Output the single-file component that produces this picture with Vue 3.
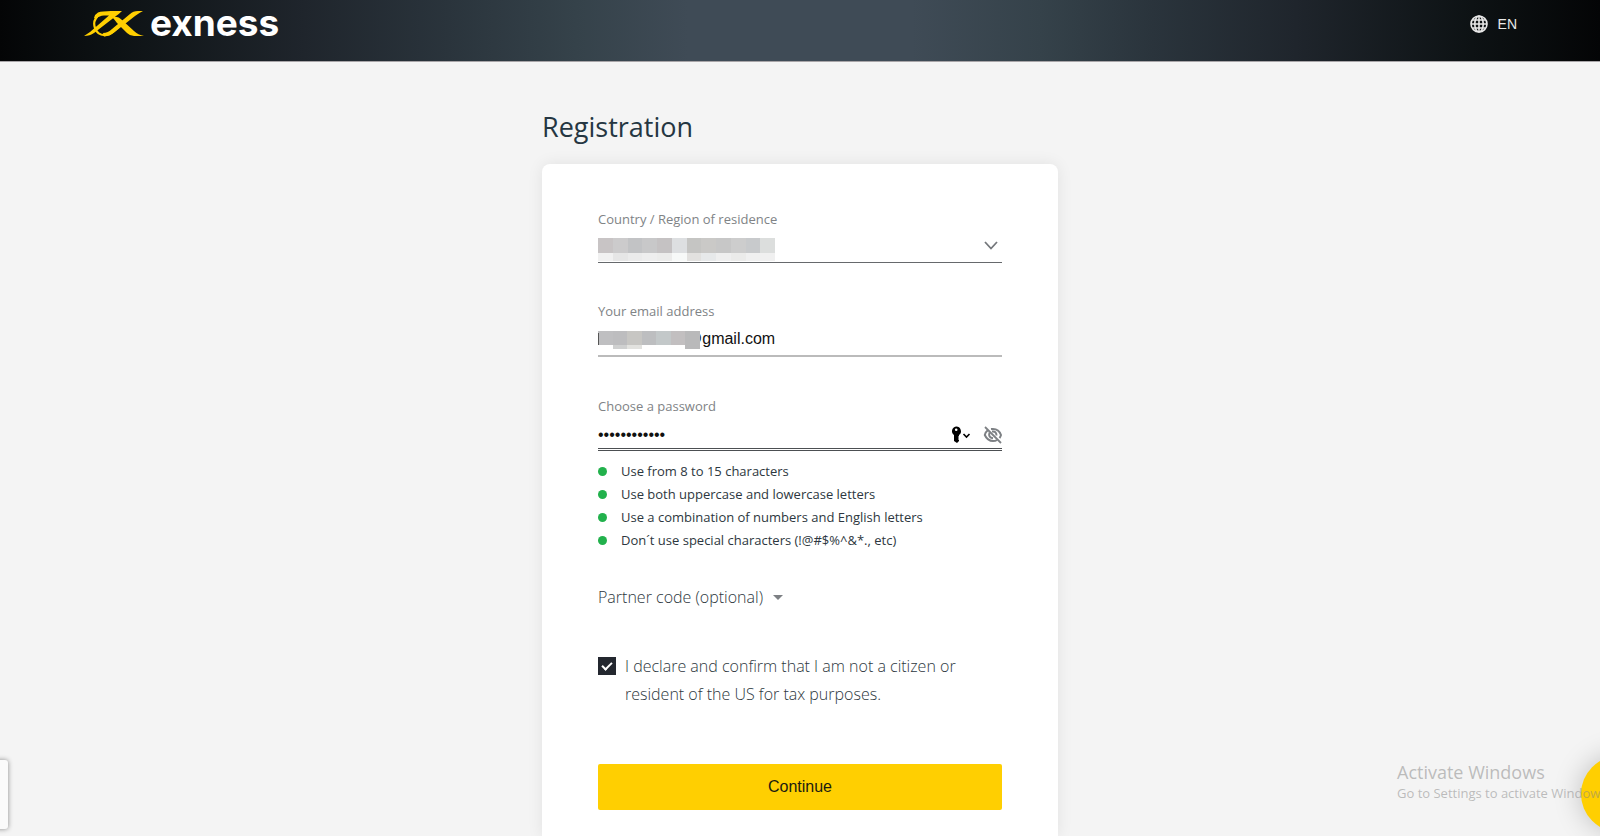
<script setup>
import { ref } from 'vue'

const country = ref('')
const email = ref('@gmail.com')
const password = ref('abcdEFGH1234')
const declared = ref(true)

const rules = [
  'Use from 8 to 15 characters',
  'Use both uppercase and lowercase letters',
  'Use a combination of numbers and English letters',
  'Don´t use special characters (!@#$%^&*., etc)'
]

const countryTop = ['#c8c4c5', '#cccbcc', '#c2c3c5', '#c8c8c9', '#c5c2c3', '#dddfe1', '#c5c5c3', '#cac9c7', '#c7c7c7', '#cdcdcd', '#c8cacc', '#dcdedd']
const countryBottom = ['#f1f1f1', '#e6e6e6', '#ebebeb', '#eeeeee', '#ececeb', '#f7f9f8', '#e2e1df', '#e7e9ea', '#efefef', '#ebebea', '#f0f0f0', '#f0f0f0']
const emailTop = ['#bfbfc1', '#bdbdbf', '#c7c6c3', '#bdbec0', '#c3c8c9', '#c2bfc0', '#b9b9ba']
const emailBottom = ['#ffffff', '#cfd0d0', '#e2e2df', '#ffffff', '#ffffff', '#ffffff', '#b9b9ba']
</script>

<template>
  <div class="page">
    <header class="header">
      <a class="logo" href="#" aria-label="exness">
        <svg class="mark" viewBox="0 0 60 26" aria-hidden="true">
          <path d="M14 1.500Q18 0 27 0L38 0Q35 3 32 5L10 22Q6 25 0 25Q3 23 6 21L25 4.500L20 4.500Q15 5 13 7L10 7Q11 3 14 1.500Z" fill="#ffcf01" />
          <path d="M16 3Q8 9 11 17Q14 26 25 23.500Q30 21 36 14" fill="none" stroke="#ffcf01" stroke-width="2.200" />
          <path d="M28 6Q34 4.500 38 9L50 20Q54 24 60 25L50 25Q46 25 43 22L33 12Q30 8 28 6Z" fill="#ffcf01" />
          <path d="M59 0Q55 2 51 5L32 20Q26 25 20 25.500L19 22Q24 22 28 18L46 3Q49 0 54 0Z" fill="#ffcf01" />
        </svg>
        <span class="word">exness</span>
      </a>
      <button class="lang" type="button">
        <svg class="globe" viewBox="0 0 18 18" aria-hidden="true" fill="none" stroke="#e8e8e8" stroke-width="1.600">
          <circle cx="9" cy="9" r="8" />
          <ellipse cx="9" cy="9" rx="4.200" ry="8" />
          <path d="M9 1V17M1 9H17M2.500 5H15.500M2.500 13H15.500" />
        </svg>
        EN
      </button>
    </header>

    <main class="main">
      <h1 class="title">Registration</h1>
      <form class="card" @submit.prevent>
        <div class="field first">
          <label for="country">Country / Region of residence</label>
          <div class="control dark">
            <select id="country" v-model="country"><option value=""></option></select>
            <div class="mosaic country-mosaic">
              <i v-for="(c, i) in countryTop" :key="'t' + i" :style="{ background: c }"></i>
              <i v-for="(c, i) in countryBottom" :key="'b' + i" :style="{ background: c }"></i>
            </div>
            <svg class="chevron" viewBox="0 0 14 9" aria-hidden="true">
              <path d="M1 1L7 7.500L13 1" fill="none" stroke="#74777b" stroke-width="1.800" />
            </svg>
          </div>
        </div>

        <div class="field">
          <label for="email">Your email address</label>
          <div class="control light">
            <input id="email" v-model="email" class="email" type="text" />
            <div class="mosaic email-mosaic">
              <i v-for="(c, i) in emailTop" :key="'t' + i" :style="{ background: c }"></i>
              <i v-for="(c, i) in emailBottom" :key="'b' + i" :style="{ background: c }"></i>
            </div>
          </div>
        </div>

        <div class="field">
          <label for="password">Choose a password</label>
          <div class="control double">
            <input id="password" v-model="password" type="password" />
            <button class="icon" type="button" aria-label="Password manager">
              <svg width="20" height="18" viewBox="0 0 20 18" aria-hidden="true">
                <path fill-rule="evenodd" d="M5 .500A4.700 4.700 0 0 1 8 9V10L7 11L8 12L7 13L8 14V15L6 17L3 15V9A4.700 4.700 0 0 1 5 .500ZM5.200 2.500A1.300 1.300 0 1 0 5.200 5.100A1.300 1.300 0 1 0 5.200 2.500Z" />
                <path d="M12.500 8L15.500 11L18.500 8" fill="none" stroke="#000" stroke-width="1.600" />
              </svg>
            </button>
            <button class="icon eye" type="button" aria-label="Show password">
              <svg width="19" height="18" viewBox="0 0 19 18" aria-hidden="true" fill="none" stroke="#7d8084" stroke-width="2">
                <path d="M5 4Q2.500 6 1.800 9Q4.500 15 10 15Q12.500 15 14 14M8 3.100Q15.500 2 18 9Q17.500 10.800 16.500 12" />
                <path d="M6.500 6.500Q5 11.500 10 12.300M9 5.600Q13.500 5 13.500 9.500" />
                <path d="M2 1L18 17" stroke-width="1.800" />
              </svg>
            </button>
          </div>
        </div>

        <ul class="rules">
          <li v-for="rule in rules" :key="rule">{{ rule }}</li>
        </ul>

        <button class="partner" type="button">
          Partner code (optional)
          <svg width="10" height="5" viewBox="0 0 10 5" aria-hidden="true"><path d="M0 0H10L5 5Z" fill="#7d8084" /></svg>
        </button>

        <label class="declare" for="declare">
          <input id="declare" v-model="declared" type="checkbox" />
          <span>I declare and confirm that I am not a citizen or resident of the US for tax purposes.</span>
        </label>

        <button class="submit" type="submit">Continue</button>
      </form>
    </main>

    <div class="side-tab"></div>
    <button class="chat" type="button" aria-label="Chat"></button>
    <div class="watermark">
      <div class="wm-title">Activate Windows</div>
      <div class="wm-text">Go to Settings to activate Windows.</div>
    </div>
  </div>
</template>

<style>
body {
  margin: 0;
}
</style>

<style scoped>
.page {
  position: relative;
  display: flex;
  flex-direction: column;
  min-height: 100vh;
  overflow: hidden;
  background: #f4f4f4;
  color: #2d3740;
  font-family: "Open Sans", "Noto Sans", sans-serif;
}
button {
  border: 0;
  padding: 0;
  background: none;
  cursor: pointer;
}
.header {
  box-sizing: border-box;
  display: flex;
  justify-content: space-between;
  height: 62px;
  padding: 0 83px 14px 84px;
  border-bottom: 1px solid #a8a5a8;
  background: linear-gradient(90deg, #040506 0%, #0d1214 7%, #1f252c 19%, #2a343c 28%, #35424a 36%, #3f4b56 43%, #3f4b56 57%, #35424a 65%, #2a343c 72%, #1f252c 81%, #0d1214 92%, #040506 100%);
}
.logo {
  display: flex;
  align-items: center;
  gap: 6px;
  color: #fff;
  text-decoration: none;
}
.mark {
  width: 60px;
  height: 26px;
}
.word {
  font: 700 37px/40px Inter, sans-serif;
  padding-bottom: 2px;
}
.lang {
  display: flex;
  align-items: center;
  gap: 10px;
  padding-top: 1px;
  color: #e8e8e8;
  font: 14px "Liberation Sans", sans-serif;
}
.globe {
  width: 18px;
  height: 18px;
}
.main {
  flex: 1;
  display: flex;
  flex-direction: column;
  width: 516px;
  margin: 0 auto;
}
.title {
  margin: 45px 0 17px;
  font-size: 27px;
  line-height: 40px;
  font-weight: 500;
  color: #253642;
}
.card {
  flex: 1;
  display: flex;
  flex-direction: column;
  padding: 45px 56px 27px;
  border-radius: 8px 8px 0 0;
  background: #fff;
  box-shadow: 0 0 16px rgba(0, 0, 0, 0.08);
}
.field {
  margin-bottom: 39px;
}
.first {
  margin-bottom: 38px;
}
.field label {
  display: block;
  font-size: 13px;
  line-height: 20px;
  color: #808386;
}
.control {
  position: relative;
  display: flex;
  align-items: center;
  box-sizing: border-box;
  height: 36px;
}
.dark {
  height: 34px;
  border-bottom: 1px solid #66696c;
}
.light {
  padding-top: 2px;
  border-bottom: 2px solid #bbb;
}
.double {
  height: 35px;
  padding-top: 5px;
  border-bottom: 3px double #4c4f52;
}
.control input,
.control select {
  flex: 1;
  min-width: 0;
  height: 26px;
  padding: 0;
  border: 0;
  outline: 0;
  appearance: none;
  background: transparent;
  color: #111;
  font: 16px "Liberation Sans", sans-serif;
}
.control .email {
  padding-left: 88px;
}
.mosaic {
  position: absolute;
  left: 0;
  display: grid;
}
.country-mosaic {
  top: 9px;
  width: 177px;
  grid-template-columns: repeat(12, 1fr);
  grid-template-rows: 15px 8px;
}
.email-mosaic {
  top: 10px;
  width: 102px;
  grid-template-columns: repeat(7, 1fr);
  grid-template-rows: 14px 4px;
}
.email-mosaic::before {
  content: "";
  position: absolute;
  left: 0;
  top: 2px;
  width: 1px;
  height: 12px;
  background: #555;
}
.chevron {
  position: absolute;
  right: 4px;
  width: 14px;
  height: 9px;
  pointer-events: none;
}
.icon {
  display: flex;
}
.eye {
  margin-left: 12px;
}
.rules {
  margin: -30px 0 33px;
  padding: 0;
  list-style: none;
  font-size: 13px;
  line-height: 23px;
}
.rules li {
  display: flex;
  align-items: center;
  gap: 14px;
}
.rules li::before {
  content: "";
  width: 9px;
  height: 9px;
  border-radius: 50%;
  background: #22b14c;
}
.partner {
  align-self: flex-start;
  display: flex;
  align-items: center;
  gap: 10px;
  color: inherit;
  font: 300 16px/24px "Open Sans", "Noto Sans", sans-serif;
}
.declare {
  display: flex;
  gap: 9px;
  margin: 43px 0 56px;
  font-size: 16px;
  font-weight: 300;
  line-height: 28px;
}
.declare input {
  appearance: none;
  flex: none;
  width: 18px;
  height: 18px;
  margin: 5px 0 0;
  background: #23272f;
  display: grid;
  place-items: center;
}
.declare input:checked::after {
  content: "";
  width: 8px;
  height: 4px;
  border: solid #fff;
  border-width: 0 0 2px 2px;
  transform: translateY(-1px) rotate(-45deg);
}
.submit {
  height: 46px;
  border-radius: 2px;
  background: #ffcf01;
  color: #1b1b10;
  font: 16px "Liberation Sans", sans-serif;
}
.side-tab {
  position: absolute;
  left: -8px;
  bottom: 8px;
  width: 16px;
  height: 69px;
  border-radius: 3px;
  background: #fafafa;
  box-shadow: 0 0 5px rgba(0, 0, 0, 0.45);
}
.chat {
  position: absolute;
  right: -57px;
  bottom: 5px;
  width: 76px;
  height: 76px;
  border-radius: 50%;
  background: #ffcf01;
  box-shadow: 0 0 28px rgba(0, 0, 0, 0.22);
}
.watermark {
  position: absolute;
  left: calc(100% - 203px);
  bottom: 34px;
  white-space: nowrap;
  color: rgba(130, 130, 130, 0.5);
  pointer-events: none;
}
.wm-title {
  font-size: 18px;
  line-height: 22px;
}
.wm-text {
  font-size: 13px;
  line-height: 20px;
}
</style>
